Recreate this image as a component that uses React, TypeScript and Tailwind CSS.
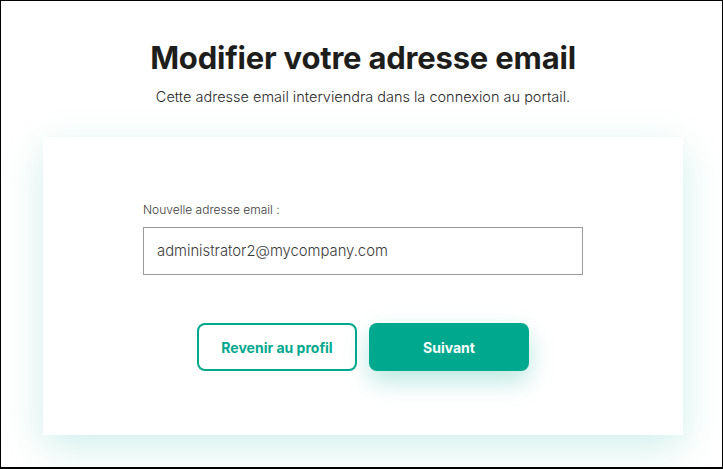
const font = "font-['Inter','Liberation_Sans',sans-serif]";

export default function App() {
  return (
    <div
      className={`${font} w-[723px] h-[469px] bg-white border border-black border-b-2 flex flex-col items-center overflow-hidden pl-[3px]`}
    >
      <h1 className="mt-[36px] text-[31px] leading-[42px] font-bold tracking-[-0.2px] text-[#1d1d1b]">
        Modifier votre adresse email
      </h1>
      <p className="mt-[9px] text-[14.5px] leading-[18px] font-light text-[#2a2a2a]">
        Cette adresse email interviendra dans la connexion au portail.
      </p>

      <div className="mt-[31px] w-[640px] h-[298px] bg-white shadow-[0_12px_38px_rgba(0,168,142,0.19)] pt-[65px] pl-[100px]">
        <label className="block text-[12px] leading-[16px] font-light text-[#3a3a3a]">
          Nouvelle adresse email :
        </label>
        <div className="mt-[9px] w-[440px] h-[48px] border border-[#9a9a9a] flex items-center px-[13px]">
          <span className="text-[14.8px] font-light text-[#3a3a3a]">
            administrator2@mycompany.com
          </span>
        </div>

        <div className="mt-[48px] ml-[54px] flex gap-[12px]">
          <button className="w-[160px] h-[48px] rounded-[8px] border-2 border-[#00a88e] bg-white text-[14px] font-bold text-[#00a88e]">
            Revenir au profil
          </button>
          <button className="w-[160px] h-[48px] rounded-[8px] bg-[#00a88e] text-[14px] font-bold text-white shadow-[0_10px_24px_rgba(0,168,142,0.28)]">
            Suivant
          </button>
        </div>
      </div>
    </div>
  );
}
